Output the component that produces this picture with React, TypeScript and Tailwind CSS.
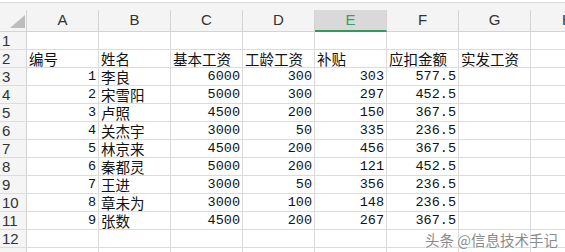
import React from "react";

const cols = ["A", "B", "C", "D", "E", "F", "G"];

type Cell = { v: string; num?: boolean };

const header: Cell[] = [
  { v: "编号" },
  { v: "姓名" },
  { v: "基本工资" },
  { v: "工龄工资" },
  { v: "补贴" },
  { v: "应扣金额" },
  { v: "实发工资" },
];

const data: [string, string, string, string, string, string][] = [
  ["1", "李良", "6000", "300", "303", "577.5"],
  ["2", "宋雪阳", "5000", "300", "297", "452.5"],
  ["3", "卢照", "4500", "200", "150", "367.5"],
  ["4", "关杰宇", "3000", "50", "335", "236.5"],
  ["5", "林京来", "4500", "200", "456", "367.5"],
  ["6", "秦都灵", "5000", "200", "121", "452.5"],
  ["7", "王进", "3000", "50", "356", "236.5"],
  ["8", "章未为", "3000", "100", "148", "236.5"],
  ["9", "张数", "4500", "200", "267", "367.5"],
];

const rows: Cell[][] = [
  [],
  header,
  ...data.map((r) => [
    { v: r[0], num: true },
    { v: r[1] },
    { v: r[2], num: true },
    { v: r[3], num: true },
    { v: r[4], num: true },
    { v: r[5], num: true },
    { v: "" },
  ]),
  [],
  [],
];

function Row({ n, cells }: { n: number; cells: Cell[] }) {
  return (
    <div className="flex h-[18px] border-b border-[#dcdcdc] box-border">
      <div className="w-[27px] shrink-0 border-r border-[#d4d4d4] bg-[#f5f5f5] pl-[2px] text-[15px] leading-[17px] text-[#333] font-['Liberation_Sans',sans-serif]">
        {n}
      </div>
      {cols.map((_, i) => {
        const c = cells[i];
        return (
          <div
            key={i}
            className={
              "w-[72px] shrink-0 border-r border-[#dcdcdc] flex items-center whitespace-nowrap leading-[16px] text-[#111] " +
              (c && c.num
                ? "justify-end pr-[2px] text-[13.5px] font-['Liberation_Mono',monospace]"
                : "justify-start pl-[2px] text-[14.5px] font-['Noto_Sans_CJK_SC',sans-serif]")
            }
          >
            {c ? c.v : ""}
          </div>
        );
      })}
      <div className="flex-1" />
    </div>
  );
}

export default function App() {
  return (
    <div className="relative w-[565px] h-[252px] overflow-hidden bg-white">
      <div className="h-[2px] bg-white" />
      <div className="h-[1px] bg-[#d8d8d8]" />
      <div className="h-[7px] bg-[#f4f4f4]" />
      <div className="flex h-[22px] bg-[#f4f4f4] border-b border-[#d4d4d4] box-border">
        <div className="relative w-[27px] shrink-0 border-r border-[#d4d4d4]">
          <svg className="absolute left-[10px] top-[5px]" width="15" height="13" viewBox="0 0 15 13">
            <polygon points="15,0 15,13 0,13" fill="#bdbdbd" />
          </svg>
        </div>
        {cols.map((c) => (
          <div
            key={c}
            className={
              "w-[72px] shrink-0 border-r border-[#d4d4d4] flex items-center justify-center text-[15px] font-['Liberation_Sans',sans-serif] " +
              (c === "E"
                ? "bg-[#d9d9d9] text-[#3a9d68] border-b-2 border-b-[#2f9a60] -mb-[1px]"
                : "text-[#333]")
            }
          >
            {c}
          </div>
        ))}
        <div className="flex-1 flex items-center pl-[31px] text-[15px] text-[#333] font-['Liberation_Sans',sans-serif]">
          H
        </div>
      </div>
      {rows.map((cells, i) => (
        <Row key={i} n={i + 1} cells={cells} />
      ))}
      <div className="absolute left-[425px] top-[231px] text-[14.5px] leading-[18px] text-[#8a8a8a] whitespace-nowrap font-['Noto_Sans_CJK_SC',sans-serif] [text-shadow:0_0_2px_#fff,0_0_2px_#fff]">
        头条 @信息技术手记
      </div>
    </div>
  );
}
